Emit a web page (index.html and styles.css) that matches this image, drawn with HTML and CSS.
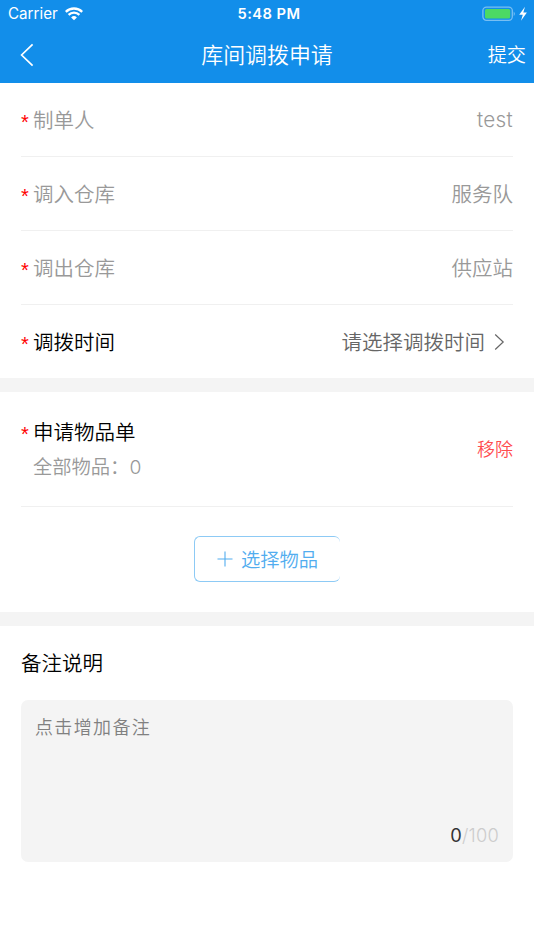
FILE: index.html
```
<!DOCTYPE html>
<html lang="zh-CN">
<head>
<meta charset="utf-8">
<meta name="viewport" content="width=device-width, initial-scale=1">
<title>库间调拨申请</title>
<link rel="stylesheet" href="styles.css">
</head>
<body>
<header class="header">
  <div class="status">
    <div class="status-left"><span class="carrier">Carrier</span>
      <svg class="wifi" width="18" height="14" viewBox="0 0 18 14" fill="none" stroke="#fff" stroke-width="2.3"><path d="M.8 4.8a11.8 11.8 0 0 1 16.4 0M3.6 7.9a7.7 7.7 0 0 1 10.8 0"/><path d="M9 13.2 6.1 10.4a4.2 4.2 0 0 1 5.8 0Z" fill="#fff" stroke="none"/></svg>
    </div>
    <time class="clock">5:48 PM</time>
    <div class="status-right">
      <svg width="46" height="16" viewBox="0 0 46 16"><rect x=".9" y="1.1" width="29.4" height="13.2" rx="3.5" fill="none" stroke="#78bff3" stroke-width="1.3"/><rect x="3" y="3.1" width="25.2" height="9.3" rx="1.5" fill="#4cd964"/><path d="M31.7 5.4q2.4 2.3 0 4.6Z" fill="#78bff3"/><path d="M43 .8 37.2 8.7h3.6L39 14.8l5.9-8.2h-3.6Z" fill="#fff"/></svg>
    </div>
  </div>
  <nav class="nav">
    <svg class="back" width="14" height="24" viewBox="0 0 14 24" fill="none" stroke="#fff" stroke-width="1.7"><path d="M12.6 1.3 1.6 12l11 10.7"/></svg>
    <h1 class="title">库间调拨申请</h1>
    <span class="submit">提交</span>
  </nav>
</header>
<main>
  <section class="fields">
    <div class="row muted"><span class="star">*</span><span class="label">制单人</span><span class="value latin">test</span></div>
    <div class="row muted"><span class="star">*</span><span class="label">调入仓库</span><span class="value">服务队</span></div>
    <div class="row muted"><span class="star">*</span><span class="label">调出仓库</span><span class="value">供应站</span></div>
    <div class="row"><span class="star">*</span><span class="label">调拨时间</span><span class="value pick">请选择调拨时间</span>
      <svg class="chevron" width="11" height="18" viewBox="0 0 11 18" fill="none" stroke="#666" stroke-width="1.2"><path d="m1.2 1.5 8 7.5-8 7.5"/></svg></div>
  </section>
  <section class="goods">
    <div class="goods-head">
      <span class="star">*</span>
      <div class="goods-text"><div class="goods-title">申请物品单</div><div class="goods-count">全部物品：<span class="count">0</span></div></div>
      <span class="remove">移除</span>
    </div>
    <div class="goods-action">
      <div class="choose"><svg width="16" height="16" viewBox="0 0 16 16" stroke="#52adef" stroke-width="1.1"><path d="M.5 8h15M8 .5v15"/></svg><span>选择物品</span></div>
    </div>
  </section>
  <section class="remark">
    <h2 class="remark-title">备注说明</h2>
    <div class="box"><span class="placeholder">点击增加备注</span><span class="counter"><b>0</b>/100</span></div>
  </section>
</main>
</body>
</html>
```
FILE: styles.css
```
* { box-sizing: border-box; }
body {
  margin: 0;
  min-height: 950px;
  background: #fff;
  color: #000;
  font: 350 20.5px/30px "Noto Sans CJK SC", sans-serif;
}
svg { display: block; flex: none; }
.header { height: 83px; background: #128eea; color: #fff; }
.status {
  display: grid;
  grid-template-columns: 1fr auto 1fr;
  align-items: center;
  height: 27px;
  padding: 0 6px 0 8px;
  font: 400 15px/18px Inter, sans-serif;
}
.status-left { display: flex; gap: 7px; align-items: center; }
.carrier { font-size: 15.2px; padding-top: 1px; }
.clock { font-weight: 600; font-size: 14.7px; letter-spacing: .45px; padding: 1px 0 0 2px; }
.status-right { justify-self: end; }
.nav {
  display: grid;
  grid-template-columns: 1fr auto 1fr;
  align-items: center;
  height: 56px;
  padding: 0 8px;
}
.back { margin-left: 12px; }
.title { margin: 0 0 2px; font-size: 21.9px; font-weight: 350; }
.submit { justify-self: end; font-size: 19.2px; margin-bottom: 2px; }
.fields { padding: 0 21px; }
.row {
  display: flex;
  align-items: center;
  height: 74px;
  border-bottom: 1px solid #f0f0f0;
}
.row:last-child { height: 73px; border: 0; }
.label, .value { padding-bottom: 2px; }
.star { width: 12px; color: #f00; font: 400 20px/30px "Liberation Sans", sans-serif; padding-top: 4px; }
.goods-head .star { padding-top: 3px; }
.label { flex: 1; }
.muted { color: #999; }
.latin { padding-bottom: 0; font: 350 20.7px/30px Inter, sans-serif; letter-spacing: .3px; }
.pick { color: #666; }
.chevron { margin: 0 8px 0 9px; }
.goods { height: 248px; border: solid #f4f4f4; border-width: 14px 0; padding: 0 21px; }
.goods-head { display: flex; height: 115px; padding-top: 24px; border-bottom: 1px solid #f0f0f0; }
.goods-text { flex: 1; }
.goods-count { margin-top: 5px; color: #999; font-size: 19.3px; }
.count { font-family: Inter, sans-serif; font-weight: 300; }
.remove { margin-top: 17px; color: #ff4d4f; font-size: 18px; }
.goods-action { padding-top: 29px; }
.choose {
  display: flex;
  align-items: center;
  gap: 8px;
  width: 146px;
  height: 46px;
  margin-left: 173px;
  padding-left: 22px;
  border: 1px solid #8dcaf5;
  border-right: 0;
  border-radius: 6px;
  color: #52adef;
  font-size: 19.3px;
}
.remark { padding: 21px 21px 0; }
.remark-title { margin: 0 0 23px; font-size: 20.5px; font-weight: 350; line-height: 30px; }
.box {
  display: flex;
  flex-direction: column;
  justify-content: space-between;
  height: 162px;
  padding: 11px 14px 12px;
  border-radius: 7px;
  background: #f4f4f4;
}
.placeholder { color: #808080; font-size: 18px; letter-spacing: 1.35px; }
.counter { align-self: flex-end; color: #ccc; font: 300 18.3px/30px Inter, sans-serif; letter-spacing: .2px; }
.counter b { color: #333; font-weight: 400; }
```
